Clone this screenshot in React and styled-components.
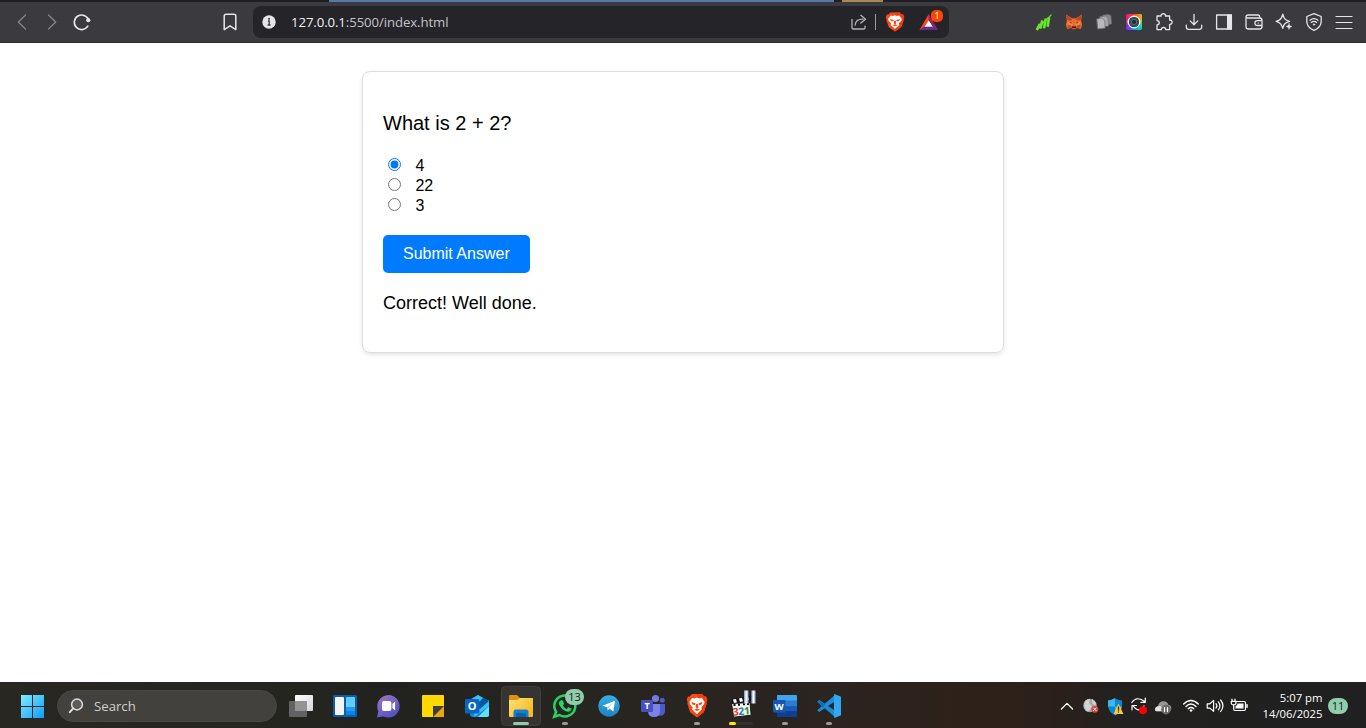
import React, { useState } from "react";
import styled, { createGlobalStyle } from "styled-components";

const GlobalStyle = createGlobalStyle`
  * { box-sizing: border-box; }
  body {
    margin: 0;
    background: #fff;
    font-family: "Liberation Sans", Arial, sans-serif;
  }
`;

const uiFont = `"Open Sans", "Noto Sans", sans-serif`;

const Screen = styled.div`
  display: flex;
  flex-direction: column;
  width: 1366px;
  height: 728px;
  overflow: hidden;
`;

const TabStrip = styled.div`
  display: flex;
  gap: 8px;
  height: 2px;
  flex: none;
  padding-left: 329px;
  background: #1f1e25;
`;

const TabGroup = styled.div`
  width: ${(p) => p.$width}px;
  background: ${(p) => p.$color};
`;

const Toolbar = styled.header`
  display: flex;
  align-items: center;
  flex: none;
  height: 41px;
  padding: 0 7px;
  background: #3b3a3f;
  border-bottom: 1px solid #2b2a2f;
`;

const ToolButton = styled.button`
  display: flex;
  align-items: center;
  justify-content: center;
  flex: none;
  width: 30px;
  height: 32px;
  padding: 0;
  border: 0;
  background: none;
  color: ${(p) => (p.$dim ? "#85848a" : "#e6e5ea")};
`;

const BookmarkButton = styled(ToolButton)`
  margin-left: 118px;
`;

const AddressBar = styled.div`
  display: flex;
  align-items: center;
  width: 696px;
  height: 32px;
  margin-left: 8px;
  padding: 0 0 0 1px;
  border-radius: 8px;
  background: #252429;
`;

const Url = styled.div`
  flex: 1;
  padding-left: 7px;
  font: 13.2px/20px ${uiFont};
  letter-spacing: -0.09px;
  color: #c3c2c7;
`;

const Host = styled.span`
  color: #f1f0f5;
`;

const Divider = styled.div`
  width: 1px;
  height: 16px;
  margin: 0 4px 0 1px;
  background: #9c9ba1;
`;

const Rewards = styled.div`
  position: relative;
  display: flex;
  width: 34px;
  height: 32px;
  margin: 0 0 0 5px;
`;

const RewardsBadge = styled.span`
  position: absolute;
  top: 4px;
  left: 16px;
  width: 12px;
  height: 12px;
  border-radius: 5px;
  background: #ff4600;
  color: #fff;
  font: 9px/12px ${uiFont};
  text-align: center;
`;

const Extensions = styled.div`
  display: flex;
  margin-left: auto;
`;

const Page = styled.main`
  flex: 1;
  padding-top: 28px;
`;

const QuizCard = styled.section`
  width: 642px;
  height: 282px;
  margin: 0 auto;
  padding: 20px;
  border: 1px solid #ddd;
  border-radius: 8px;
  box-shadow: 0 2px 4px rgba(0, 0, 0, 0.1);
`;

const Question = styled.p`
  margin: 20px 0;
  font-size: 20px;
  line-height: 23px;
`;

const Options = styled.div`
  display: flex;
  flex-direction: column;
  margin-bottom: 20px;
`;

const Option = styled.label`
  display: flex;
  height: 20px;
  font-size: 16px;
  line-height: 21px;

  input {
    width: 13px;
    height: 13px;
    margin: 3px 14.4px 0 5px;
  }
`;

const SubmitButton = styled.button`
  display: block;
  height: 38px;
  padding: 10px 20px;
  border: 0;
  border-radius: 5px;
  background: #007bff;
  color: #fff;
  font: 16px/18px "Liberation Sans", Arial, sans-serif;
`;

const Result = styled.p`
  margin: 20px 0 18px;
  font-size: 18px;
  line-height: 21px;
`;

const Taskbar = styled.footer`
  display: flex;
  align-items: center;
  flex: none;
  height: 46px;
  padding-left: 11px;
  background: linear-gradient(90deg, #282721 0, #252520 280px, #22221f 380px, #272520 600px, #2b2420 830px, #2e2119 970px, #2c201a 1040px, #222120 1130px, #202020 1366px);
  font-family: ${uiFont};
`;

const TaskItem = styled.div`
  position: relative;
  display: flex;
  flex: none;
  width: 44px;
  height: 46px;
`;

const SearchBox = styled.div`
  display: flex;
  align-items: center;
  gap: 10px;
  width: 220px;
  height: 32px;
  margin: 2px 2px 0 2px;
  padding-left: 10px;
  border: 1px solid #484742;
  border-radius: 16px;
  background: #42413d;
  color: #d0cfcc;
  font-size: 13.2px;
`;

const CountBadge = styled.span`
  position: absolute;
  top: 7px;
  left: 22px;
  width: 19px;
  height: 16px;
  border-radius: 8px;
  background: #91cdac;
  color: #14201a;
  font: 11px/16px ${uiFont};
  text-align: center;
`;

const Tray = styled.div`
  display: flex;
  align-items: center;
  margin-left: auto;
`;

const TrayGroup = styled.div`
  display: flex;
  margin-right: ${(p) => p.$gap}px;
`;

const Clock = styled.div`
  width: 72px;
  margin-top: 1px;
  color: #fff;
  font-size: 11.3px;
  line-height: 16px;
  letter-spacing: 0;
  text-align: right;
`;

const NotificationBadge = styled.span`
  width: 20px;
  height: 16px;
  margin: 2px 18px 0 5.5px;
  border-radius: 8px;
  background: #91cdac;
  color: #14201a;
  font-size: 11px;
  line-height: 16px;
  text-align: center;
`;

const ToolIcon = ({ children, width = 20 }) => (
  <svg width={width} height="20" viewBox={`0 0 ${width} 20`} fill="none" stroke="currentColor" strokeWidth="1.3" strokeLinecap="round" strokeLinejoin="round">
    {children}
  </svg>
);

const LionMark = () => (
  <>
    <path d="M7 2h10l2.2 2.3 1.8-.2 1.2 3-.9 2.2.2 1.3-2.7 7.7L12 23l-6.8-4.7-2.7-7.7.2-1.3-.9-2.2 1.2-3 1.8.2z" fill="#fb4b12" />
    <path d="M12 2h5l2.2 2.3 1.8-.2 1.2 3-.9 2.2.2 1.3-2.7 7.7L12 23z" fill="#f63c0b" />
    <path d="M7.3 5.4l2.4.5L12 5l2.3.9 2.4-.5 2.8 3.7-.7 2.2-2.5 2.6.5 2-2.2 1.7L12 20l-2.6-2.4-2.2-1.7.5-2-2.5-2.6-.7-2.2z" fill="#fff" />
    <path d="M6.5 9.2l4.1 1.1-.7 1.6-2.4-.5zm11 0l-4.1 1.1.7 1.6 2.4-.5zM11 11h2l.4 3-1.4.9-1.4-.9zM9 16l3-1.2 3 1.2-3 1.2z" fill="#f54a17" />
  </>
);

const TaskSvg = ({ children, width = 44 }) => (
  <svg width={width} height="46" viewBox={`0 0 ${width} 46`} fill="none">{children}</svg>
);

const TrayIcon = ({ children }) => (
  <svg width="24" height="46" viewBox="0 0 24 46" fill="none" stroke="#fff" strokeWidth="1.2" strokeLinecap="round" strokeLinejoin="round">{children}</svg>
);

const Running = () => <rect x="19" y="40" width="6" height="3" rx="1.5" fill="#9a9996" />;

function BrowserToolbar() {
  return (
    <Toolbar>
      <ToolButton $dim aria-label="Back"><ToolIcon><path d="M13.5 3L6.3 10l7.2 7" /></ToolIcon></ToolButton>
      <ToolButton $dim aria-label="Forward"><ToolIcon><path d="M6.5 3l7.2 7-7.2 7" /></ToolIcon></ToolButton>
      <ToolButton aria-label="Reload">
        <ToolIcon>
          <path d="M16 8.2A7.3 7.3 0 1 0 15.2 14.2" strokeWidth="1.6" transform="translate(.6 0)" />
          <circle cx="16.3" cy="8.2" r="2.1" fill="currentColor" stroke="none" />
        </ToolIcon>
      </ToolButton>
      <BookmarkButton aria-label="Bookmark">
        <ToolIcon><path d="M4.2 17.6V4.3q0-2 2-2h7.6q2 0 2 2v13.3L10 13.8z" strokeWidth="1.5" /></ToolIcon>
      </BookmarkButton>
      <AddressBar>
        <ToolButton as="div">
          <ToolIcon>
            <circle cx="10" cy="10" r="6.7" fill="#e5e4e9" stroke="none" />
            <path d="M9 9h1.2v3.8M8.6 13h3" stroke="#39383e" strokeWidth="1.3" strokeLinecap="butt" />
            <rect x="9.2" y="6" width="1.7" height="1.7" fill="#39383e" stroke="none" />
          </ToolIcon>
        </ToolButton>
        <Url><Host>127.0.0.1</Host>:5500/index.html</Url>
        <ToolButton aria-label="Share">
          <ToolIcon><g stroke="#b4b3b8"><path d="M3 7.5v8.2q0 1.3 1.3 1.3h10.4q1.3 0 1.3-1.3v-1.6M6.2 13c.2-4 2.6-5.8 7.8-5.8M11.8 3.3l4.8 4-4.8 3.8" /></g></ToolIcon>
        </ToolButton>
        <Divider />
        <ToolButton aria-label="Shields"><svg width="20" height="21" viewBox="1 1.5 22 23"><LionMark /></svg></ToolButton>
        <Rewards>
          <svg width="34" height="32" viewBox="0 0 34 32">
            <path d="M13.8 8L4.5 24h4.2l5.1-8z" fill="#ff4724" />
            <path d="M13.8 8L23 24l-4.1-2.6-5.1-8z" fill="#9e1f63" />
            <path d="M4.5 24H23l-4-3.2H8.7z" fill="#662d91" />
            <path d="M13.8 14.3l4.1 6.5H9.7z" fill="#fff" />
          </svg>
          <RewardsBadge>1</RewardsBadge>
        </Rewards>
      </AddressBar>
      <Extensions>
        <ToolButton><ToolIcon><g stroke="#69e52a" strokeWidth="2.7" strokeLinecap="butt"><path d="M2.8 18l3.2-6M6.2 16.6l2.2-8.2M10 16.2l1.8-9.6M13.6 14.8l1.4-9.6" /><path d="M2.5 17.5L17.5 2.6" strokeWidth="1.2" /></g></ToolIcon></ToolButton>
        <ToolButton>
          <ToolIcon><g stroke="none">
            <path d="M2 2.6l6 3.6h4l6-3.6-.9 5.8 1 4-1.2 4.6-4-.9-1.5 1.2H8.6l-1.5-1.2-4 .9-1.2-4.6 1-4z" fill="#ed6a2a" />
            <path d="M2 2.6l6.3 4.6-2 1.6L3 8zM18 2.6l-6.3 4.6 2 1.6L17 8z" fill="#bd4820" />
            <path d="M4 9.5l4 .8.8 3.1-5.2-1.2zM16 9.5l-4 .8-.8 3.1 5.2-1.2z" fill="#f98a45" />
            <path d="M5.2 10l2.6.4-.5 1.4zM14.8 10l-2.6.4.5 1.4z" fill="#253848" />
            <path d="M8.2 14.2h3.6l.8 2.1H7.4z" fill="#49221b" />
            <path d="M3.8 13l3 .3.5 2.2-3.7.7zM16.2 13l-3 .3-.5 2.2 3.7.7z" fill="#cf4a21" />
          </g></ToolIcon>
        </ToolButton>
        <ToolButton>
          <ToolIcon><g stroke="#747377" strokeWidth=".7"><path d="M9 3.2l5-.7 2.8 1.2.7 8.2-6.8.8z" fill="#89888b" /><path d="M6 4.8l5.5-.9 2.5 1.8.5 8.3-7.2.8z" fill="#a6a5a7" /><path d="M3 7l5-1 2.6 2.5.5 7.6-7.2.8z" fill="#b9b8ba" /></g></ToolIcon>
        </ToolButton>
        <ToolButton>
          <svg width="20" height="20" viewBox="0 0 20 20">
            <defs>
              <linearGradient id="lensTop"><stop offset="0" stopColor="#ff1267" /><stop offset=".5" stopColor="#ff3b2c" /><stop offset="1" stopColor="#ffb300" /></linearGradient>
              <linearGradient id="lensBottom"><stop offset="0" stopColor="#8a1cff" /><stop offset=".5" stopColor="#1e8cff" /><stop offset="1" stopColor="#10e3b0" /></linearGradient>
              <linearGradient id="lensFade" x1="0" y1="0" x2="0" y2="1"><stop offset=".2" stopColor="#fff" /><stop offset=".8" stopColor="#000" /></linearGradient>
              <mask id="lensMask"><rect x="2" y="2" width="16" height="16" fill="url(#lensFade)" /></mask>
            </defs>
            <rect x="2" y="2" width="16" height="16" rx="2" fill="url(#lensBottom)" />
            <rect x="2" y="2" width="16" height="16" rx="2" fill="url(#lensTop)" mask="url(#lensMask)" />
            <circle cx="10" cy="10" r="6.5" fill="#fff" /><circle cx="10" cy="10" r="5.2" fill="#354856" /><circle cx="10" cy="10" r="2.6" fill="#1e2a34" stroke="#547080" />
          </svg>
        </ToolButton>
        <ToolButton><ToolIcon><path d="M3 4h4.1c-.5-3 4.9-3 4.4 0h4.1v4c3.3-.4 3.3 4.8 0 4.4v5.2H11.7c.5-2.8-4.8-2.8-4.3 0H3v-4.7c3-.1 3-4.1 0-4.3z" /></ToolIcon></ToolButton>
        <ToolButton><ToolIcon><path d="M10 2.5v10M6.2 8.9l3.8 3.8 3.8-3.8M2.3 13.2v1.7q0 2.4 2.4 2.4h10.6q2.4 0 2.4-2.4v-1.7" /></ToolIcon></ToolButton>
        <ToolButton><ToolIcon><rect x="2.6" y="3" width="14.8" height="14" strokeWidth="1.3" /><path d="M13 2.5h5v15h-5z" fill="currentColor" stroke="none" /></ToolIcon></ToolButton>
        <ToolButton><ToolIcon><path d="M15.6 6V4.6q0-1.6-1.6-1.6H4.2Q2 3 2 5v9.5Q2 17 4.5 17h11q2.5 0 2.5-2.5v-6Q18 6 15.5 6H4Q2 6 2 4.7M18 8.7h-4.5q-2.6 0-2.6 2.4t2.6 2.4H18M14.2 11.1h.1" /></ToolIcon></ToolButton>
        <ToolButton><ToolIcon><path d="M8.8 2.2c1.1 4.3 2 5.7 6.8 7.2-2.2.7-3.7 1.4-4.7 2.4-1 1-1.5 2.4-2.1 4.6C7.5 12.3 6.3 10.7 2.1 9.4 6.3 8 7.5 6.7 8.8 2.2z" /><path d="M15 11.5c.5 2 .8 2.4 3 3-2.2.6-2.5 1.1-3 3.1-.5-2-.8-2.5-3-3.1 2.2-.6 2.5-1 3-3z" fill="currentColor" strokeWidth=".4" /></ToolIcon></ToolButton>
        <ToolButton><ToolIcon><path d="M10 1.7l7.2 2.8v4.9c0 4.3-2.5 7-7.2 9-4.7-2-7.2-4.7-7.2-9V4.5z" /><path d="M6 8.2q4-3 8 0M7.3 10.4q2.7-2 5.4 0" /><circle cx="10" cy="12.5" r=".8" fill="currentColor" strokeWidth=".6" /></ToolIcon></ToolButton>
        <ToolButton><ToolIcon><path d="M2 4.5h16M2 10.5h16M2 16.5h16" strokeWidth="1.2" /></ToolIcon></ToolButton>
      </Extensions>
    </Toolbar>
  );
}

function Quiz() {
  const [answer, setAnswer] = useState("4");
  return (
    <QuizCard>
      <Question>What is 2 + 2?</Question>
      <Options>
        {["4", "22", "3"].map((value) => (
          <Option key={value}>
            <input type="radio" name="answer" checked={answer === value} onChange={() => setAnswer(value)} />
            {value}
          </Option>
        ))}
      </Options>
      <SubmitButton>Submit Answer</SubmitButton>
      <Result>Correct! Well done.</Result>
    </QuizCard>
  );
}

function SystemTaskbar() {
  return (
    <Taskbar>
      <TaskItem>
        <TaskSvg>
          <defs><linearGradient id="win" x1="10" y1="13" x2="33" y2="36" gradientUnits="userSpaceOnUse"><stop stopColor="#80edff" /><stop offset="1" stopColor="#109bfa" /></linearGradient></defs>
          <path d="M10 13h11v11H10zM22 13h11v11H22zM10 25h11v11H10zM22 25h11v11H22z" fill="url(#win)" />
        </TaskSvg>
      </TaskItem>
      <SearchBox>
        <svg width="16" height="18" viewBox="0 0 16 18" fill="#5d5c5a" stroke="#ddd" strokeWidth="1.5" strokeLinecap="round"><circle cx="9" cy="7.5" r="5.4" /><path d="M5.2 11.3L1.8 15.2" strokeWidth="2" /></svg>
        Search
      </SearchBox>
      <TaskItem><TaskSvg><defs><linearGradient id="tv" x2="1" y2="1"><stop stopColor="#fff" /><stop offset="1" stopColor="#d5d5d5" /></linearGradient></defs><rect x="16" y="13" width="18" height="16" rx="1" fill="url(#tv)" /><rect x="10" y="19" width="18" height="16" rx="1" fill="#626262" /><path d="M16 19h12v10H16z" fill="#939393" /></TaskSvg></TaskItem>
      <TaskItem><TaskSvg><rect x="10" y="13" width="24" height="22" rx="1.5" fill="#0d5dac" /><rect x="12" y="15" width="9" height="18" rx="1" fill="#f4f4f4" /><rect x="23" y="15" width="9" height="18" rx="1" fill="#60cfff" /><path d="M23 25h9v4h-9z" fill="#239bf0" /><path d="M23 29h9v3q0 1-1 1h-7q-1 0-1-1z" fill="#0784e5" /></TaskSvg></TaskItem>
      <TaskItem><TaskSvg><defs><linearGradient id="chat" x1="13" y1="14" x2="28" y2="35" gradientUnits="userSpaceOnUse"><stop stopColor="#9a76bd" /><stop offset="1" stopColor="#4c4fc9" /></linearGradient></defs><path d="M21.5 13a11.3 11.3 0 1 1-4.8 21.6L10 35.2l1.3-6A11.4 11.4 0 0 1 21.5 13z" fill="url(#chat)" /><rect x="15" y="19" width="9.4" height="10" rx="2" fill="#fff" /><path d="M25.4 22l2.7-2.5V28.5L25.4 26z" fill="#fff" /></TaskSvg></TaskItem>
      <TaskItem><TaskSvg><rect x="11" y="13" width="22" height="22" rx="1" fill="#ffd800" /><path d="M22 24h11v10l-1 1H22z" fill="#e5a90b" /><path d="M22 35V24h11z" fill="#3e3e3d" /></TaskSvg></TaskItem>
      <TaskItem><TaskSvg><path d="M14 18l9-5 11 6v14q0 2-2 2H18q-3 0-3-3z" fill="#1488d9" /><path d="M15 18l8-5 5 3-9 8zM20 26l14-8v6l-15 11z" fill="#36c5f0" /><path d="M21 24l7-8 6 3-9 8z" fill="#0757a0" /><path d="M23 35l11-11v9q0 2-2 2z" fill="#64dfff" /><rect x="10" y="17" width="14.4" height="14.4" rx="1.5" fill="#0669bf" /><text x="17.2" y="28.2" fill="#fff" fontFamily="Open Sans" fontSize="11" fontWeight="700" textAnchor="middle">O</text></TaskSvg></TaskItem>
      <TaskItem><TaskSvg><defs><linearGradient id="folder" x1="10" y1="17" x2="30" y2="35" gradientUnits="userSpaceOnUse"><stop stopColor="#ffdf74" /><stop offset="1" stopColor="#f8b91c" /></linearGradient></defs><rect x="2.5" y="4.5" width="39" height="39" rx="4" fill="#353431" stroke="#403f3b" /><path d="M10 14q0-1 1-1h7l3 3h12q1 0 1 1v6H10z" fill="#d99311" /><path d="M10 18h8l3-2h13v18q0 1-1 1H11q-1 0-1-1z" fill="url(#folder)" /><path d="M14.5 35v-5q0-2.5 2.5-2.5h10q2.5 0 2.5 2.5v5z" fill="#167ed0" /><path d="M18 31h8q1 0 1 1v3H17v-3q0-1 1-1z" fill="#0762ad" /><rect x="14" y="40" width="16" height="3" rx="1.5" fill="#91cdac" /></TaskSvg></TaskItem>
      <TaskItem><TaskSvg><path d="M13.1 29.8A10.5 10.5 0 1 1 16.5 33l-5.3 1.7z" stroke="#25d366" strokeWidth="2.5" /><path d="M17.2 18.7l1.5-.7 1.2.7 1.2 3-1.2 1.8q1.4 2.5 3.9 3.4l1.5-1.8 3.1 1.5q.2 2.4-2.8 3.1-2.2.4-6.2-2.5-4.1-4.2-3.7-6.6.2-1.1 1.5-1.9z" fill="#25d366" /><Running /></TaskSvg><CountBadge>13</CountBadge></TaskItem>
      <TaskItem><TaskSvg><defs><linearGradient id="tg" y1="0" y2="1" x2="0"><stop stopColor="#37aee2" /><stop offset="1" stopColor="#1d83c4" /></linearGradient></defs><circle cx="22" cy="24" r="10.7" fill="url(#tg)" /><path d="M15.3 23.8L28.1 18.8 26.3 29.4 22.5 26.6 20.7 28.5 20.3 25.2z" fill="#fff" /><path d="M20.3 25.2l5.5-4.1-4.3 4.8-.8 2.6z" fill="#a9cee4" /></TaskSvg></TaskItem>
      <TaskItem><TaskSvg><circle cx="24.5" cy="16.5" r="3.6" fill="#7279dc" /><circle cx="31.2" cy="18.2" r="2.5" fill="#5059c9" /><path d="M26 22h8v7q-.2 4.8-5 4.8h-3z" fill="#5059c9" /><path d="M18 22h11v7q0 6-6 6t-6-6z" fill="#7b83eb" /><rect x="10" y="18" width="12" height="12" rx="1" fill="#4751bd" /><text x="16" y="27.3" fill="#fff" fontFamily="Open Sans" fontSize="9" fontWeight="700" textAnchor="middle">T</text></TaskSvg></TaskItem>
      <TaskItem><TaskSvg><g transform="translate(9.9 9.8) scale(1.01 1.12)"><LionMark /></g><Running /></TaskSvg></TaskItem>
      <TaskItem><TaskSvg><path d="M12 17.5l20-4 1 5-20 4z" fill="#151515" /><path d="M14 17.6l3-.7 1 3.6-3 .7zM20 16.4l3-.7 1 3.6-3 .7zM26 15.2l3-.7 1 3.6-3 .7z" fill="#fff" /><path d="M12.5 21.5l18.5-1 1.2 12.7-17.5 2z" fill="#f6f3ec" stroke="#171717" /><path d="M14.5 22h2v2h-2zM19 21.7h2v2h-2zM24 21.3h2v2h-2zM28 21h2v2h-2z" fill="#111" /><g fontFamily="Open Sans" fontSize="10.5" fontWeight="700" transform="rotate(-5 22 30)"><text x="13.6" y="33" fill="#ce432e">3</text><text x="19.3" y="33" fill="#287dbd">2</text><text x="25.1" y="33" fill="#27932f">1</text></g><defs><linearGradient id="pause"><stop stopColor="#7e91d2" /><stop offset=".5" stopColor="#fff" /><stop offset="1" stopColor="#8799d4" /></linearGradient></defs><rect x="25" y="8.5" width="4.5" height="13" fill="url(#pause)" /><rect x="32.3" y="8.5" width="4.3" height="13" fill="url(#pause)" /><rect x="10" y="40" width="24" height="3" rx="1.5" fill="#33302d" /><rect x="10" y="40" width="7" height="3" rx="1.5" fill="#ffe500" /></TaskSvg></TaskItem>
      <TaskItem><TaskSvg><path d="M14 13h19q1 0 1 1v5H14z" fill="#41a5ee" /><path d="M14 18.5h20V24H14z" fill="#2b7cd3" /><path d="M14 24h20v5.5H14z" fill="#185abd" /><path d="M14 29.5h20V34q0 1-1 1H15q-1 0-1-1z" fill="#103f91" /><rect x="10" y="18" width="12.5" height="12.5" rx="1" fill="#1757b3" /><text x="16.2" y="27.7" fill="#fff" fontFamily="Open Sans" fontSize="9.5" fontWeight="700" textAnchor="middle">W</text><Running /></TaskSvg></TaskItem>
      <TaskItem><TaskSvg><path d="M10.2 19.8l2-1.8L28.5 29v6.4z" fill="#168ddd" /><path d="M10.2 28.2l2 1.9L28.5 19v-6.4z" fill="#168ddd" /><path d="M27.5 12l6.5 2.7v18.6L27.5 36l-.6-2V14z" fill="#31a9f2" /><path d="M10.2 19.8l2-1.8 6.2 4.6-2.8 2.6z" fill="#0872bd" /><Running /></TaskSvg></TaskItem>
      <Tray>
        <TrayGroup $gap={4}>
          <TrayIcon><path d="M6.4 27l5.6-5.7 5.6 5.7" /></TrayIcon>
          <TrayIcon><g stroke="none"><circle cx="11" cy="23.5" r="6.8" fill="#a6a6a6" /><path d="M6 19q3-2.5 5-2l-1 4 3 3-2 4-3 1.5q-4-4-2-10.500zM13 17l4 4-1 3-3-3z" fill="#d2d2d2" /><circle cx="15.8" cy="27.3" r="3.5" fill="#d84848" /></g><path d="M14.5 26l2.6 2.6m0-2.6l-2.6 2.6" strokeWidth=".9" /></TrayIcon>
          <TrayIcon><g stroke="none"><path d="M12 16.2q3 2 7 2.2v5q0 6-7 10-7-4-7-10v-5q4-.2 7-2.2z" fill="#0a87d5" /><path d="M12 16.2v8.3H5v-6.1q4-.2 7-2.2zM12 24.5h7q-1 5.6-7 9z" fill="#3cb7ef" /><path d="M15.5 21.500l4.900 10.500h-9.800z" fill="#ffc82c" /></g><path d="M15.5 25v3.2M15.5 29.9v.2" stroke="#332c16" strokeWidth="1.3" /></TrayIcon>
          <TrayIcon><path d="M4.8 20.5q5-7 13-1M18.3 16v4.300h-4.500M17 24q-5 8-11-.3M5 27.800v-4.300h4.500" /><circle cx="16" cy="28.2" r="4" fill="#f80000" stroke="none" /></TrayIcon>
          <TrayIcon><g stroke="none"><path d="M4 27.8q0-3 3-3.6 1-5 5.5-5 4 0 5 3.8 2.8.2 2.8 3.2 0 3-3 3H6q-2 0-2-1.4z" fill="#979797" /><path d="M4 27.8q0-3 3-3.6 4-1 6 5.1H6q-2 0-2-1.5z" fill="#e3e3e3" /><circle cx="15" cy="27.6" r="4.8" fill="#6a6a6a" /></g><path d="M13.5 25.7v3.8M16.5 25.7v3.8" /></TrayIcon>
        </TrayGroup>
        <TrayGroup $gap={0}>
          <TrayIcon><path d="M4.7 22.1q7.200-7 14.600 0M7 24.500q5-4.800 10 0M9.200 26.800q2.800-2.500 5.600 0" strokeWidth="1.4" /><circle cx="12" cy="28.5" r="1.1" fill="#fff" strokeWidth=".4" /></TrayIcon>
          <TrayIcon><path d="M4.2 21.8h2.7l3.7-3.3v10.8l-3.7-3.2H4.2zM13 21.700q1.800 2.100 0 4.300M15.300 19.800q3.200 4 0 8M17.600 18q4.600 5.700 0 11.500" /></TrayIcon>
          <TrayIcon><path d="M9.500 19.500h7.500q1.500 0 1.500 1.500v6q0 1.500-1.500 1.500H8q-1.300 0-1.300-1.500v-3.500M5 17v2M8 17v2M4.300 19.300h4.600v1.700q0 1.800-2.300 1.800T4.300 21z" /><path d="M10.500 21.500h6v5h-8V24q2-.5 2-2.500z" fill="#fff" stroke="none" /><path d="M20 22.700v2.600" strokeWidth="1.500" /></TrayIcon>
        </TrayGroup>
        <Clock>5:07 pm<br />14/06/2025</Clock>
        <NotificationBadge>11</NotificationBadge>
      </Tray>
    </Taskbar>
  );
}

export default function App() {
  return (
    <Screen>
      <GlobalStyle />
      <TabStrip><TabGroup $width={505} $color="#5679a9" /><TabGroup $width={41} $color="#a68a50" /></TabStrip>
      <BrowserToolbar />
      <Page><Quiz /></Page>
      <SystemTaskbar />
    </Screen>
  );
}
